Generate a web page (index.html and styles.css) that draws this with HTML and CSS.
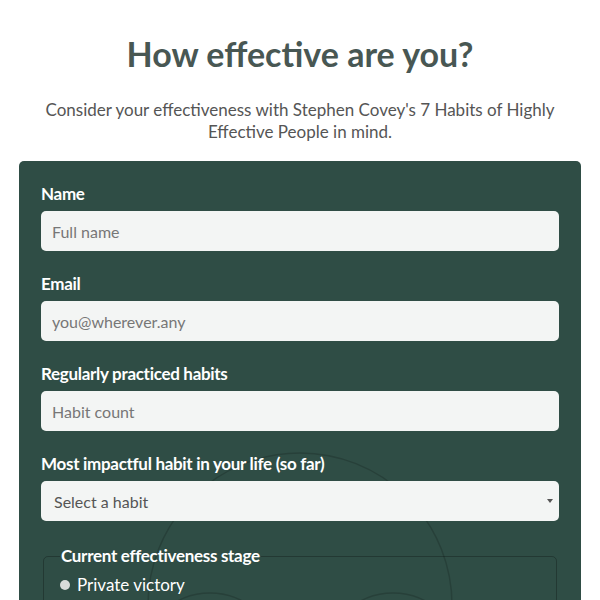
FILE: index.html
```html
<!DOCTYPE html>
<html lang="en">
<head>
<meta charset="utf-8">
<title>How effective are you?</title>
<link rel="stylesheet" href="styles.css">
</head>
<body>
<main class="page">
  <h1 class="title">How effective are you?</h1>
  <p class="intro">Consider your effectiveness with Stephen Covey's 7 Habits of Highly Effective People in mind.</p>
  <form class="card">
    <svg class="card-bg" width="562" height="460" viewBox="0 0 562 460" aria-hidden="true">
      <circle cx="281" cy="444" r="152" />
      <circle cx="191" cy="500" r="68" />
      <circle cx="374" cy="500" r="68" />
    </svg>
    <div class="field">
      <label class="label" for="name">Name</label>
      <input class="input" id="name" type="text" placeholder="Full name">
    </div>
    <div class="field">
      <label class="label" for="email">Email</label>
      <input class="input" id="email" type="email" placeholder="you@wherever.any">
    </div>
    <div class="field">
      <label class="label" for="count">Regularly practiced habits</label>
      <input class="input" id="count" type="text" placeholder="Habit count">
    </div>
    <div class="field field-last">
      <label class="label" for="habit">Most impactful habit in your life (so far)</label>
      <div class="select-wrap">
        <select class="input select" id="habit">
          <option>Select a habit</option>
        </select>
      </div>
    </div>
    <fieldset class="stage">
      <legend class="legend">Current effectiveness stage</legend>
      <label class="radio"><span class="dot"></span>Private victory</label>
    </fieldset>
  </form>
</main>
</body>
</html>
```
FILE: styles.css
```css
* { box-sizing: border-box; }
html, body { margin: 0; padding: 0; background: #fff; }
body {
  font-family: "Lato", "Open Sans", sans-serif;
  color: #555;
}
.page {
  padding: 0 19px;
}
.title {
  margin: 0;
  padding-top: 34px;
  text-align: center;
  font-size: 34px;
  line-height: 40px;
  font-weight: 700;
  color: #485753;
}
.intro {
  margin: 25px 0 0;
  padding: 0 20px;
  text-align: center;
  font-size: 17px;
  line-height: 22px;
  color: #555;
}
.card {
  position: relative;
  overflow: hidden;
  margin-top: 18px;
  background: #2f4d45;
  border-radius: 5px;
  padding: 22px 22px 40px;
  min-height: 500px;
}
.card-bg {
  position: absolute;
  left: 0;
  top: 0;
  fill: none;
  stroke: rgba(0, 0, 0, 0.17);
  stroke-width: 1.5;
}
.field {
  position: relative;
  display: flex;
  flex-direction: column;
  gap: 6px;
  margin-bottom: 22px;
}
.field-last { margin-bottom: 24px; }
.label {
  font-size: 17px;
  line-height: 22px;
  font-weight: 700;
  letter-spacing: -0.3px;
  color: #fff;
}
.input {
  width: 100%;
  height: 40px;
  border: none;
  border-radius: 5px;
  background: #f3f5f4;
  padding: 0 11px;
  font-family: inherit;
  font-size: 16px;
  color: #555;
}
.input::placeholder { color: #777; }
.select-wrap { position: relative; }
.select-wrap::after {
  content: "";
  position: absolute;
  right: 6px;
  top: 18px;
  border-left: 3px solid transparent;
  border-right: 3px solid transparent;
  border-top: 4px solid #555;
}
.select {
  appearance: none;
  -webkit-appearance: none;
  padding-left: 13px;
}
.stage {
  position: relative;
  margin: 0 2px;
  border: 1px solid rgba(0, 0, 0, 0.25);
  border-radius: 5px;
  padding: 7px 16px 20px;
}
.legend {
  padding: 0 1px;
  font-size: 17px;
  line-height: 22px;
  font-weight: 700;
  letter-spacing: -0.3px;
  color: #fff;
}
.radio {
  display: flex;
  align-items: center;
  gap: 7px;
  font-size: 17px;
  line-height: 22px;
  color: #fff;
}
.dot {
  width: 10px;
  height: 10px;
  border-radius: 50%;
  background: #d8dcda;
}
```
